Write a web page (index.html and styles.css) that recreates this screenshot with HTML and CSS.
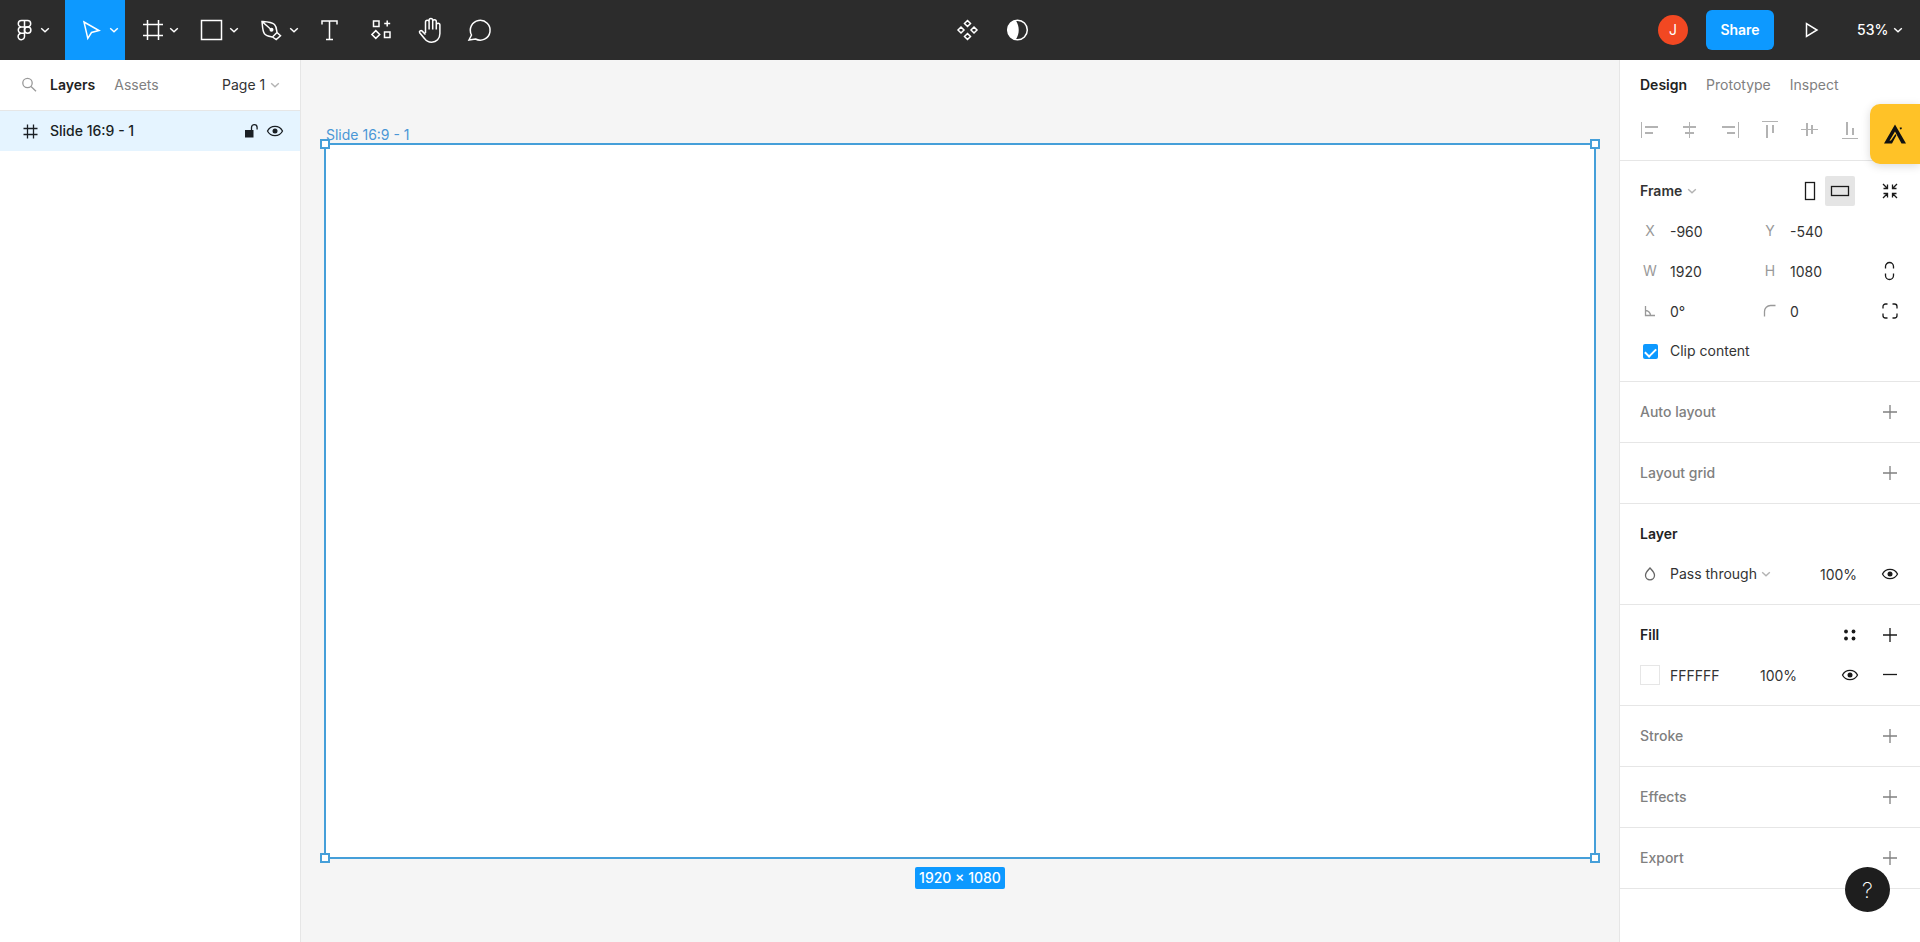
FILE: index.html
```html
<!DOCTYPE html>
<html lang="en">
<head>
    <meta charset="UTF-8">
    <meta name="viewport" content="width=device-width, initial-scale=1.0">
    <title>Slide 16:9 - 1</title>
    <link rel="stylesheet" href="styles.css">
</head>
<body>
    <!-- shared icons -->
    <svg class="sprite" aria-hidden="true">
        <symbol id="chevron" viewBox="0 0 10 10"><path d="M1.2 3.2L5 6.8l3.8-3.6"/></symbol>
        <symbol id="plus" viewBox="0 0 20 20"><path d="M10 3v14M3 10h14"/></symbol>
        <symbol id="eye" viewBox="0 0 20 20">
            <path d="M2.500 10C4 7 6.800 5.300 10 5.300s6 1.700 7.500 4.700c-1.500 3-4.300 4.700-7.500 4.700S4 13 2.500 10z"/>
            <circle class="solid" cx="10" cy="10" r="2.500"/>
        </symbol>
    </svg>

    <header class="toolbar">
        <div class="tools">
            <button class="tool menu" aria-label="Main menu">
                <svg class="icon" viewBox="0 0 30 30"><path d="M14.500 5.500h-3a3.200 3.200 0 0 0 0 6.400h3zM14.500 5.500h3a3.200 3.200 0 0 1 0 6.400h-3zM14.500 11.900h-3a3.200 3.200 0 0 0 0 6.400h3zM14.500 18.300h-3a3.200 3.200 0 1 0 3 3.200z"/><circle cx="17.700" cy="15.100" r="3.200"/></svg>
                <svg class="chevron"><use href="#chevron"/></svg>
            </button>
            <button class="tool active" aria-label="Move">
                <svg class="icon" viewBox="0 0 30 30"><path d="M9 7l15 8.500-7.500 2-3.700 5.800z"/></svg>
                <svg class="chevron"><use href="#chevron"/></svg>
            </button>
            <button class="tool" aria-label="Frame">
                <svg class="icon" viewBox="0 0 30 30"><path d="M12.500 5v20M23.500 5v20M8 9.500h20M8 20.500h20"/></svg>
                <svg class="chevron"><use href="#chevron"/></svg>
            </button>
            <button class="tool" aria-label="Rectangle">
                <svg class="icon" viewBox="0 0 30 30"><rect x="6.500" y="5.500" width="20" height="19"/></svg>
                <svg class="chevron"><use href="#chevron"/></svg>
            </button>
            <button class="tool" aria-label="Pen">
                <svg class="icon" viewBox="0 0 30 30"><path d="M7 6.500c5 .3 9.500.4 12.500 3 2 2 2 5 2.500 8L17.500 22c-3-.6-6-.8-8-3.300C7.300 15.800 7.600 11 7 6.500zM7 6.500l8.500 7.500M22 17.500l3.500 3.300-4.300 3.700-3.700-2.500"/><circle class="solid" cx="16.500" cy="14.800" r="2"/></svg>
                <svg class="chevron"><use href="#chevron"/></svg>
            </button>
            <button class="tool single" aria-label="Text">
                <svg class="icon" viewBox="0 0 30 30"><path d="M7 9.500V6h15v3.500M14.500 6v18.500M11 24.500h7"/></svg>
            </button>
            <button class="tool single" aria-label="Resources">
                <svg class="icon" viewBox="0 0 30 30"><path d="M8.500 6H14v5.500H8.500zM19.500 17H25v5.500h-5.500zM22.200 5.500v6M19.200 8.500h6M10.800 15.600l3.900 3.900-3.900 3.900-3.900-3.900z"/></svg>
            </button>
            <button class="tool single" aria-label="Hand">
                <svg class="icon" viewBox="0 0 30 30"><path d="M10.500 18V7a1.800 1.800 0 0 1 3.600 0v7.500M14.100 7V5.300a1.800 1.800 0 0 1 3.600 0v9.200M17.700 6.500a1.800 1.800 0 0 1 3.600 0v8M21.300 10a1.800 1.800 0 0 1 3.600 0v8.500c0 5.300-3.400 8.700-8.200 8.700-3.400 0-5.700-1.200-7.300-3.800L4.700 17.800c-.9-1.600 1.200-3 2.500-1.700l3.300 3.400"/></svg>
            </button>
            <button class="tool single" aria-label="Comment">
                <svg class="icon" viewBox="0 0 30 30"><path d="M4 25l2.500-5a9.900 9.900 0 1 1 4 4z"/></svg>
            </button>
        </div>

        <div class="actions">
            <button class="tool single" aria-label="Create component">
                <svg class="icon" viewBox="0 0 30 30"><path d="M15.500 5.500l3 3-3 3-3-3zM15.500 18.500l3 3-3 3-3-3zM9 12l3 3-3 3-3-3zM22 12l3 3-3 3-3-3z"/></svg>
            </button>
            <button class="tool single" aria-label="Use as mask">
                <svg class="icon" viewBox="0 0 30 30"><circle cx="15.500" cy="15" r="9.800"/><path class="solid" d="M13.500 5.300a9.900 9.900 0 0 0 0 19.400c4.300-5 4.300-14.400 0-19.400z"/></svg>
            </button>
        </div>

        <div class="session">
            <span class="avatar">J</span>
            <button class="share">Share</button>
            <button class="tool single" aria-label="Present">
                <svg class="icon" viewBox="0 0 30 30"><path d="M10.500 8.500v13L21 15z"/></svg>
            </button>
            <label class="picker zoom">
                <select aria-label="Zoom"><option>53%</option></select>
                <svg class="chevron"><use href="#chevron"/></svg>
            </label>
        </div>
    </header>

    <main class="workspace">
        <aside class="panel layers">
            <div class="tabs">
                <button class="search" aria-label="Search">
                    <svg class="glyph" viewBox="0 0 20 20"><circle cx="7.500" cy="8" r="4.700"/><path d="M11 11.500l5 4.700"/></svg>
                </button>
                <button class="tab current">Layers</button>
                <button class="tab">Assets</button>
                <label class="picker page">
                    <select aria-label="Page"><option>Page 1</option></select>
                    <svg class="chevron"><use href="#chevron"/></svg>
                </label>
            </div>
            <div class="layer">
                <svg class="glyph" viewBox="0 0 20 20"><path d="M7.500 3.500v14M13.500 3.500v14M3.500 7.500h14M3.500 13.500h14"/></svg>
                <span class="layer-name">Slide 16:9 - 1</span>
                <button class="mini" aria-label="Lock">
                    <svg class="glyph" viewBox="0 0 20 20"><path class="solid" d="M5 9h8.500v7.500H5z"/><path d="M11.500 9.500V6.500a2.800 2.800 0 0 1 5.600 0v2"/></svg>
                </button>
                <button class="mini" aria-label="Hide"><svg class="glyph"><use href="#eye"/></svg></button>
            </div>
        </aside>

        <section class="canvas">
            <div class="frame">
                <span class="frame-name">Slide 16:9 - 1</span>
                <i class="handle nw"></i>
                <i class="handle ne"></i>
                <i class="handle sw"></i>
                <i class="handle se"></i>
            </div>
            <span class="frame-size">1920 × 1080</span>
        </section>

        <aside class="panel design">
            <div class="tabs">
                <button class="tab current">Design</button>
                <button class="tab">Prototype</button>
                <button class="tab">Inspect</button>
            </div>
            <div class="section align">
                <button class="cell" aria-label="Align left"><svg class="glyph" viewBox="0 0 20 20"><path class="thin" d="M1.500 2v16"/><path d="M5 7h13M5 13h8"/></svg></button>
                <button class="cell" aria-label="Align horizontal centers"><svg class="glyph" viewBox="0 0 20 20"><path class="thin" d="M9.500 2v16"/><path d="M3 7h13M5 13h9"/></svg></button>
                <button class="cell" aria-label="Align right"><svg class="glyph" viewBox="0 0 20 20"><path class="thin" d="M18.500 2v16"/><path d="M2 7h13M7 13h8"/></svg></button>
                <button class="cell" aria-label="Align top"><svg class="glyph" viewBox="0 0 20 20"><path class="thin" d="M2 1.500h16"/><path d="M7 5v13M13 5v8"/></svg></button>
                <button class="cell" aria-label="Align vertical centers"><svg class="glyph" viewBox="0 0 20 20"><path class="thin" d="M1 9.500h17"/><path d="M7 3v13M12 5v9"/></svg></button>
                <button class="cell" aria-label="Align bottom"><svg class="glyph" viewBox="0 0 20 20"><path class="thin" d="M2 18.500h16"/><path d="M7 2v13M13 8v7"/></svg></button>
            </div>

            <div class="section">
                <div class="row">
                    <label class="picker title">
                        <select aria-label="Selection type"><option>Frame</option></select>
                        <svg class="chevron"><use href="#chevron"/></svg>
                    </label>
                    <button class="orient" aria-label="Portrait"><svg class="glyph" viewBox="0 0 20 20"><rect x="5.500" y="1.500" width="9" height="17"/></svg></button>
                    <button class="orient on" aria-label="Landscape"><svg class="glyph" viewBox="0 0 20 20"><rect x="1.500" y="5.500" width="17" height="9"/></svg></button>
                    <button class="cell gap dark" aria-label="Resize to fit"><svg class="glyph" viewBox="0 0 20 20"><path d="M3 3l4 4M3.500 7.500h4v-4M17 3l-4 4M16.500 7.500h-4v-4M3 17l4-4M3.500 12.500h4v4M17 17l-4-4M16.500 12.500h-4v4"/></svg></button>
                </div>
                <div class="row">
                    <label class="cell hint" for="pos-x">X</label>
                    <input class="value" id="pos-x" type="text" value="-960">
                    <label class="cell hint" for="pos-y">Y</label>
                    <input class="value" id="pos-y" type="text" value="-540">
                </div>
                <div class="row">
                    <label class="cell hint" for="width">W</label>
                    <input class="value" id="width" type="text" value="1920">
                    <label class="cell hint" for="height">H</label>
                    <input class="value" id="height" type="text" value="1080">
                    <button class="cell dark" aria-label="Constrain proportions"><svg class="glyph" viewBox="0 0 20 20"><path d="M5.500 7.500V5.500a4 4 0 0 1 8 0v2M5.500 12.500v2a4 4 0 0 0 8 0v-2"/></svg></button>
                </div>
                <div class="row">
                    <label class="cell hint" for="rotation" aria-label="Rotation"><svg class="glyph" viewBox="0 0 20 20"><path d="M5.500 5v9.500H15M5.500 9.500a5 5 0 0 1 5 5"/></svg></label>
                    <input class="value" id="rotation" type="text" value="0°">
                    <label class="cell hint" for="radius" aria-label="Corner radius"><svg class="glyph" viewBox="0 0 20 20"><path d="M4.500 15.500v-5a6 6 0 0 1 6-6h5"/></svg></label>
                    <input class="value" id="radius" type="text" value="0">
                    <button class="cell dark" aria-label="Independent corners"><svg class="glyph" viewBox="0 0 20 20"><path d="M3 7.500V5.500A2.500 2.500 0 0 1 5.500 3h2M12.500 3h2A2.500 2.500 0 0 1 17 5.500v2M17 12.500v2a2.500 2.500 0 0 1-2.500 2.500h-2M7.500 17h-2A2.500 2.500 0 0 1 3 14.500v-2"/></svg></button>
                </div>
                <div class="row">
                    <span class="cell"><input class="check" id="clip" type="checkbox" checked></span>
                    <label for="clip">Clip content</label>
                </div>
            </div>

            <div class="section">
                <div class="row muted"><h2>Auto layout</h2><button class="cell" aria-label="Add auto layout"><svg class="glyph"><use href="#plus"/></svg></button></div>
            </div>
            <div class="section">
                <div class="row muted"><h2>Layout grid</h2><button class="cell" aria-label="Add layout grid"><svg class="glyph"><use href="#plus"/></svg></button></div>
            </div>

            <div class="section">
                <div class="row"><h2>Layer</h2></div>
                <div class="row">
                    <span class="cell blend-icon"><svg class="glyph" viewBox="0 0 20 20"><path d="M10 4c-2 2.300-4.500 4.300-4.500 7.300a4.500 4.500 0 0 0 9 0C14.500 8.300 12 6.300 10 4z"/></svg></span>
                    <label class="picker blend">
                        <select aria-label="Blend mode"><option>Pass through</option></select>
                        <svg class="chevron"><use href="#chevron"/></svg>
                    </label>
                    <input class="value layer-opacity" type="text" value="100%" aria-label="Layer opacity">
                    <button class="cell dark" aria-label="Hide layer"><svg class="glyph"><use href="#eye"/></svg></button>
                </div>
            </div>

            <div class="section">
                <div class="row">
                    <h2>Fill</h2>
                    <button class="cell dark" aria-label="Fill styles"><svg class="glyph" viewBox="0 0 20 20"><g class="solid"><circle cx="6" cy="6.500" r="1.900"/><circle cx="13.500" cy="6.500" r="1.900"/><circle cx="6" cy="13.500" r="1.900"/><circle cx="13.500" cy="13.500" r="1.900"/></g></svg></button>
                    <button class="cell dark" aria-label="Add fill"><svg class="glyph"><use href="#plus"/></svg></button>
                </div>
                <div class="row">
                    <span class="cell"><button class="swatch" aria-label="Fill color"></button></span>
                    <input class="value hex" type="text" value="FFFFFF" aria-label="Fill hex">
                    <input class="value fill-opacity" type="text" value="100%" aria-label="Fill opacity">
                    <button class="cell dark" aria-label="Hide fill"><svg class="glyph"><use href="#eye"/></svg></button>
                    <button class="cell dark" aria-label="Remove fill"><svg class="glyph" viewBox="0 0 20 20"><path d="M3 9.500h14"/></svg></button>
                </div>
            </div>

            <div class="section">
                <div class="row muted"><h2>Stroke</h2><button class="cell" aria-label="Add stroke"><svg class="glyph"><use href="#plus"/></svg></button></div>
            </div>
            <div class="section">
                <div class="row muted"><h2>Effects</h2><button class="cell" aria-label="Add effect"><svg class="glyph"><use href="#plus"/></svg></button></div>
            </div>
            <div class="section">
                <div class="row muted"><h2>Export</h2><button class="cell" aria-label="Add export"><svg class="glyph"><use href="#plus"/></svg></button></div>
            </div>
        </aside>
    </main>

    <button class="extension" aria-label="Extension">
        <svg viewBox="0 0 24 20"><path class="solid" d="M1 19.500L12 .5l11 19h-4.500L12 7.500l-5.500 9.300 1.500-.3 4.500-6.500.8 1.500L9 19.500z"/><path class="solid" d="M16.500 3.800l2-.6.3 1.800-1.500.4z"/></svg>
    </button>
    <button class="help" aria-label="Help">?</button>
</body>
</html>
```
FILE: styles.css
```css
* {
    box-sizing: border-box;
}

body {
    margin: 0;
    height: 100vh;
    display: flex;
    flex-direction: column;
    overflow: hidden;
    font-family: Inter, "Liberation Sans", sans-serif;
    font-size: 14px;
    line-height: 20px;
    color: #333333;
    background-color: #ffffff;
}

button,
input,
select {
    margin: 0;
    padding: 0;
    border: 0;
    font: inherit;
    color: inherit;
    background: none;
}

select {
    appearance: none;
}

svg {
    display: block;
    flex: none;
    fill: none;
    stroke: currentColor;
}

.solid {
    fill: currentColor;
    stroke: none;
}

.sprite {
    position: absolute;
    width: 0;
    height: 0;
}

.icon {
    width: 30px;
    height: 30px;
    stroke-width: 1.5;
}

.glyph {
    width: 20px;
    height: 20px;
    stroke-width: 1.3;
}

.chevron {
    width: 10px;
    height: 10px;
    stroke-width: 1.4;
}

/* toolbar */
.toolbar {
    flex: none;
    display: flex;
    height: 60px;
    color: #ffffff;
    background-color: #2c2c2c;
}

.tools,
.actions,
.session {
    display: flex;
    align-items: center;
}

.actions {
    flex: 1;
    justify-content: center;
}

.session {
    flex: none;
    width: 441px;
    padding-right: 17px;
    justify-content: flex-end;
}

.tool {
    display: flex;
    align-items: center;
    gap: 4px;
    width: 60px;
    height: 60px;
    padding-left: 10px;
}

.tool.menu {
    width: 65px;
    gap: 0;
}

.tool.single {
    width: 50px;
}

.tool.active {
    background-color: #0d99ff;
}

.avatar {
    width: 30px;
    height: 30px;
    margin-right: 18px;
    border-radius: 50%;
    line-height: 30px;
    text-align: center;
    background-color: #f24822;
}

.share {
    width: 68px;
    height: 40px;
    margin-right: 12px;
    border-radius: 6px;
    font-weight: 600;
    background-color: #0d99ff;
}

.picker {
    display: flex;
    align-items: center;
    gap: 4px;
}

.picker .chevron {
    color: #b3b3b3;
}

.zoom {
    margin-left: 21px;
    font-weight: 500;
}

.zoom .chevron {
    color: #ffffff;
}

/* panels */
.workspace {
    flex: 1;
    display: flex;
    min-height: 0;
}

.panel {
    flex: none;
    background-color: #ffffff;
}

.layers {
    width: 301px;
    border-right: 1px solid #e6e6e6;
}

.design {
    width: 301px;
    border-left: 1px solid #e6e6e6;
}

.tabs {
    display: flex;
    align-items: center;
    gap: 19px;
    height: 50px;
    padding: 0 20px;
}

.layers .tabs {
    height: 51px;
    border-bottom: 1px solid #e6e6e6;
}

.tab {
    color: #808080;
}

.tab.current {
    font-weight: 600;
    color: #222222;
}

.search {
    margin-right: -9px;
    color: #999999;
}

.page {
    margin-left: auto;
}

.layer {
    display: flex;
    align-items: center;
    height: 40px;
    padding: 0 15px 0 20px;
    color: #1a1f24;
    background-color: #e5f4ff;
}

.layer-name {
    flex: 1;
    margin-left: 10px;
    font-weight: 500;
}

.mini {
    margin-left: 5px;
}

.section {
    padding: 10px;
    border-bottom: 1px solid #e6e6e6;
}

.align {
    display: flex;
    padding-top: 0;
    color: #b3b3b3;
}

.align .glyph {
    stroke-width: 2;
}

.align .thin {
    stroke-width: 1;
}

.row {
    display: flex;
    align-items: center;
    height: 40px;
}

.row h2 {
    flex: 1;
    margin: 0;
    padding-left: 10px;
    font-size: 14px;
    font-weight: 600;
    color: #222222;
}

.row.muted,
.row.muted h2 {
    font-weight: 500;
    color: #808080;
}

.cell {
    flex: none;
    display: flex;
    align-items: center;
    justify-content: center;
    width: 40px;
    height: 40px;
}

.dark {
    color: #1a1a1a;
}

.gap {
    margin-left: 15px;
}

.hint {
    color: #999999;
}

.blend-icon {
    color: #666666;
}

.value {
    width: 80px;
    height: 30px;
}

.hex {
    width: 90px;
}

.fill-opacity {
    flex: 1;
    min-width: 0;
}

.title {
    flex: 1;
    padding-left: 10px;
    font-weight: 600;
}

.blend {
    flex: 1;
}

.layer-opacity {
    width: 50px;
}

.orient {
    display: flex;
    align-items: center;
    justify-content: center;
    width: 30px;
    height: 30px;
    color: #1a1a1a;
}

.orient.on {
    border-radius: 2px;
    background-color: #e5e5e5;
}

.check {
    appearance: none;
    display: flex;
    justify-content: center;
    width: 15px;
    height: 15px;
    border-radius: 2px;
    background-color: #0d99ff;
}

.check:checked::before {
    content: "";
    width: 9px;
    height: 5px;
    margin-top: 4px;
    border-left: 2px solid #ffffff;
    border-bottom: 2px solid #ffffff;
    transform: rotate(-45deg);
}

.swatch {
    width: 20px;
    height: 20px;
    border: 1px solid #e6e6e6;
    background-color: #ffffff;
}

/* canvas */
.canvas {
    flex: 1;
    display: flex;
    flex-direction: column;
    align-items: center;
    gap: 8px;
    padding: 83px 23px 0;
    background-color: #f5f5f5;
}

.frame {
    position: relative;
    width: 100%;
    aspect-ratio: 16 / 9;
    border: 2px solid #459fd9;
    background-color: #ffffff;
}

.frame-name {
    position: absolute;
    left: 0;
    bottom: 100%;
    line-height: 20px;
    color: #4a97d6;
}

.frame-size {
    padding: 0 4px;
    border-radius: 2px;
    line-height: 22px;
    font-weight: 500;
    color: #ffffff;
    background-color: #0d99ff;
}

.handle {
    position: absolute;
    width: 10px;
    height: 10px;
    border: 2px solid #459fd9;
    background-color: #ffffff;
}

.nw,
.ne {
    top: -6px;
}

.sw,
.se {
    bottom: -6px;
}

.nw,
.sw {
    left: -6px;
}

.ne,
.se {
    right: -6px;
}

/* floating buttons */
.extension {
    position: fixed;
    top: 104px;
    right: 0;
    display: flex;
    align-items: center;
    justify-content: center;
    width: 50px;
    height: 60px;
    border-radius: 10px 0 0 10px;
    color: #111111;
    background-color: #ffc227;
    box-shadow: 0 2px 10px rgba(0, 0, 0, 0.15);
}

.extension svg {
    width: 24px;
    height: 20px;
}

.help {
    position: fixed;
    right: 30px;
    bottom: 30px;
    width: 45px;
    height: 45px;
    border-radius: 50%;
    font-size: 22px;
    font-weight: 200;
    color: #ffffff;
    background-color: #1e1e1e;
}
```
